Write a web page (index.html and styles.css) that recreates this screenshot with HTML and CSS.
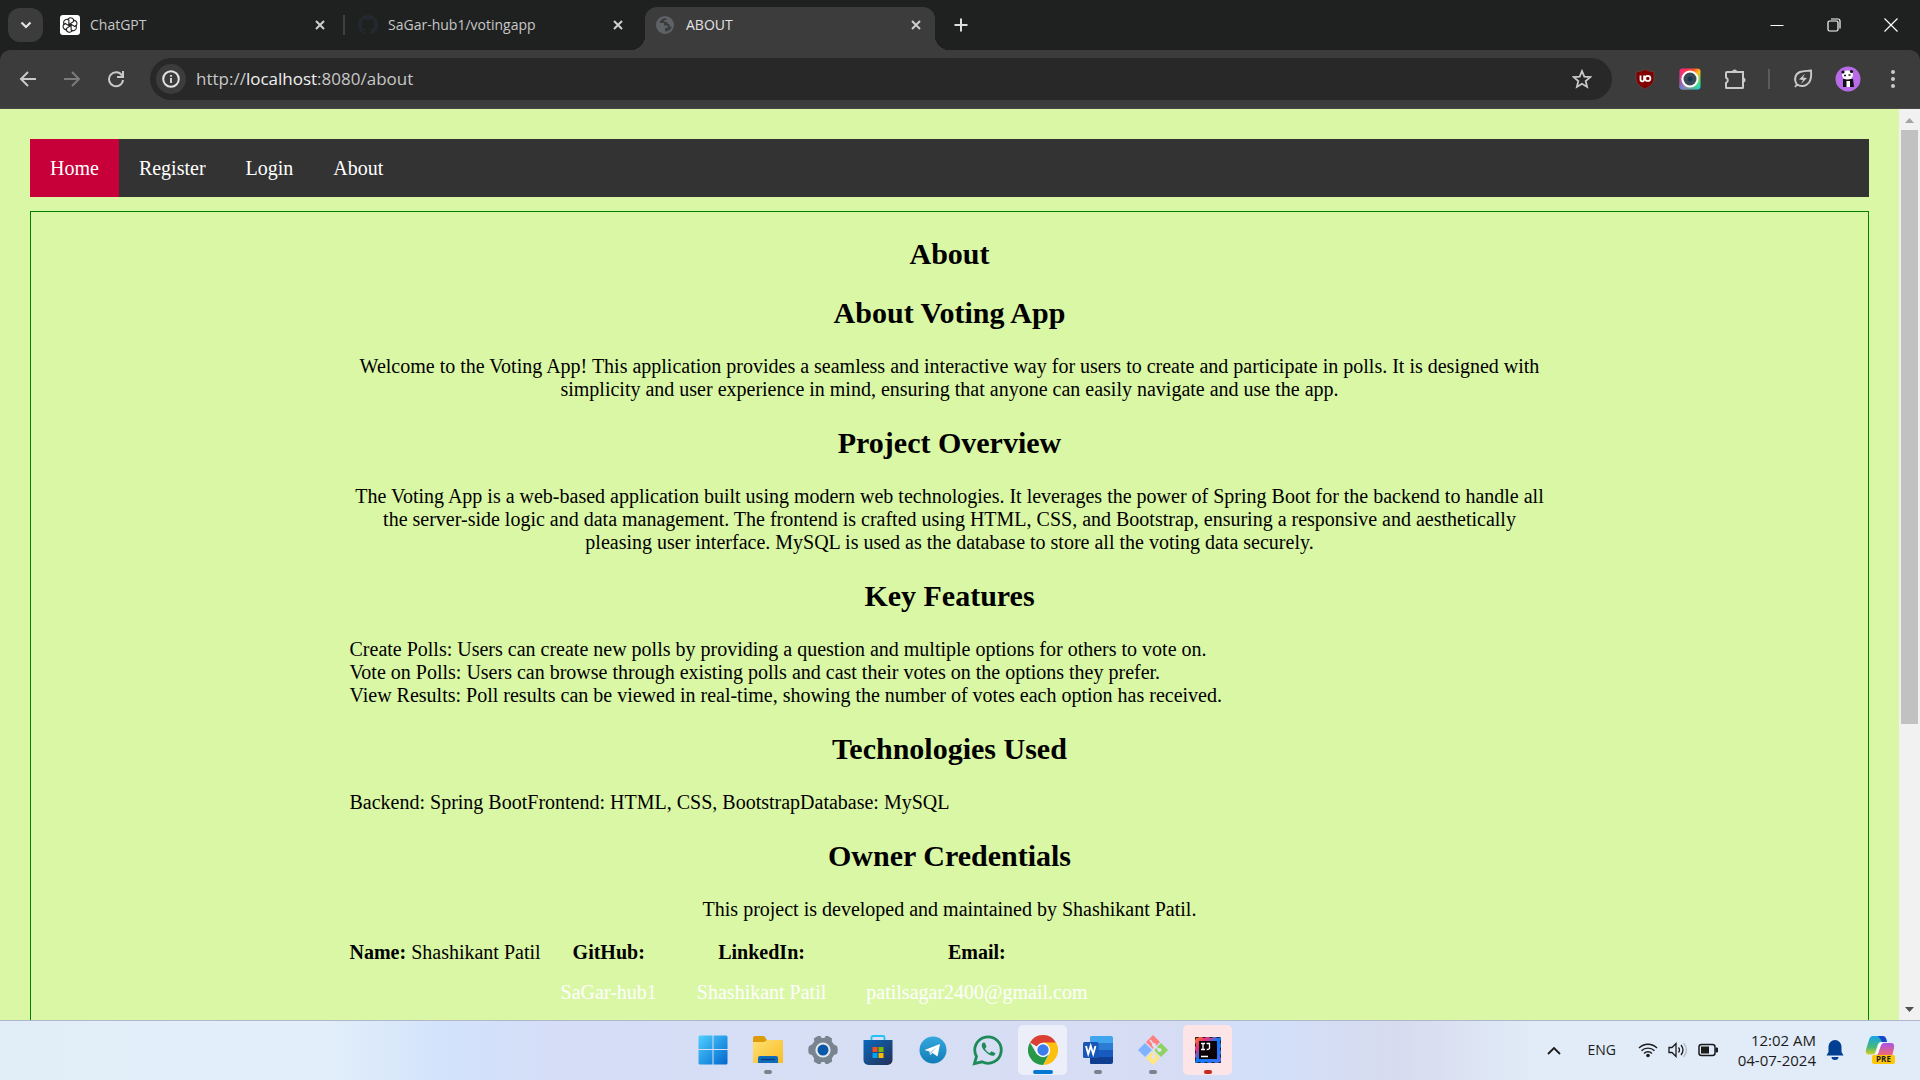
FILE: index.html
```html
<!DOCTYPE html>
<html lang="en">
<head>
<meta charset="utf-8">
<title>ABOUT</title>
<link rel="stylesheet" href="styles.css">
</head>
<body>
<header class="browser">
  <div class="tabstrip">
    <button class="tab-search" aria-label="Search tabs"><svg width="12" height="8" viewBox="0 0 12 8"><path d="M1.500 1.500 6 6l4.500-4.500" fill="none" stroke="#e3e3e3" stroke-width="2.200"/></svg></button>
    <div class="tabs">
      <div class="tab">
        <svg class="favicon" viewBox="0 0 20 20"><rect width="20" height="20" rx="3" fill="#fff"/><g fill="none" stroke="#222" stroke-width="1.100"><path id="petal" d="M7.500 5.200c.5-2.200 3-3 4.800-1.900 1.200.7 1.700 1.900 1.500 3.200L10 8.700v3"/><use href="#petal" transform="rotate(60 10 10)"/><use href="#petal" transform="rotate(120 10 10)"/><use href="#petal" transform="rotate(180 10 10)"/><use href="#petal" transform="rotate(240 10 10)"/><use href="#petal" transform="rotate(300 10 10)"/></g></svg>
        <span class="tab-title">ChatGPT</span>
        <button class="tab-close" aria-label="Close tab"><svg width="10" height="10" viewBox="0 0 10 10"><path d="M1 1l8 8M9 1 1 9"/></svg></button>
      </div>
      <div class="tab tab-divided">
        <svg class="favicon" viewBox="0 0 16 16"><path fill="#24292f" d="M8 0C3.580 0 0 3.580 0 8c0 3.540 2.290 6.530 5.470 7.590.4.070.55-.17.55-.38v-1.490c-2.010.37-2.530-.49-2.690-.94-.09-.23-.48-.94-.82-1.130-.28-.15-.68-.52-.01-.53.63-.01 1.080.58 1.230.82.72 1.210 1.870.87 2.330.66.07-.52.28-.87.51-1.070-1.780-.2-3.640-.89-3.640-3.950 0-.87.31-1.590.82-2.150-.08-.2-.36-1.020.08-2.120 0 0 .67-.21 2.200.82a7.400 7.400 0 0 1 4 0c1.530-1.040 2.200-.82 2.200-.82.44 1.100.16 1.920.08 2.120.51.56.82 1.270.82 2.150 0 3.070-1.870 3.750-3.650 3.950.29.25.54.73.54 1.480v2.200c0 .21.15.46.55.38A8 8 0 0 0 8 0z"/></svg>
        <span class="tab-title">SaGar-hub1/votingapp</span>
        <button class="tab-close" aria-label="Close tab"><svg width="10" height="10" viewBox="0 0 10 10"><path d="M1 1l8 8M9 1 1 9"/></svg></button>
      </div>
      <div class="tab tab-active">
        <svg class="favicon" viewBox="0 0 20 20"><circle cx="9" cy="10" r="9" fill="#5f6368"/><path d="M9.500 3c-3 .2-5.500 2-6 5h4.500v2.500h3.500v2.500H9v3.500c3.500 0 6-2 6.800-5h-2.300V9h-2V7H8.500V5H11z" fill="#3c3c3c"/></svg>
        <span class="tab-title">ABOUT</span>
        <button class="tab-close" aria-label="Close tab"><svg width="10" height="10" viewBox="0 0 10 10"><path d="M1 1l8 8M9 1 1 9"/></svg></button>
      </div>
    </div>
    <button class="tab-new" aria-label="New tab"><svg width="14" height="14" viewBox="0 0 14 14"><path d="M7 .5v13M.5 7h13" stroke="#dedede" stroke-width="2"/></svg></button>
    <div class="window-controls">
      <button aria-label="Minimize"><svg width="14" height="14" viewBox="0 0 14 14"><path d="M.5 7.500h13" stroke="#fff"/></svg></button>
      <button aria-label="Restore"><svg width="14" height="14" viewBox="0 0 14 14"><g fill="none" stroke="#fff" stroke-width="1.200"><rect x="1" y="3" width="10" height="10" rx="1.500"/><path d="M4 1h7a2 2 0 0 1 2 2v7.500"/></g></svg></button>
      <button aria-label="Close"><svg width="14" height="14" viewBox="0 0 14 14"><path d="M.5.5l13 13M13.500.5l-13 13" stroke="#fff" stroke-width="1.200"/></svg></button>
    </div>
  </div>
  <div class="toolbar">
    <button class="tool" aria-label="Back"><svg width="18" height="18" viewBox="0 0 18 18"><path d="M17 9H2M9 2 2 9l7 7" fill="none" stroke="#c9c9c9" stroke-width="2"/></svg></button>
    <button class="tool" aria-label="Forward"><svg width="18" height="18" viewBox="0 0 18 18"><path d="M1 9h15M9 2l7 7-7 7" fill="none" stroke="#7b7b7b" stroke-width="2"/></svg></button>
    <button class="tool" aria-label="Reload"><svg width="18" height="18" viewBox="0 0 18 18"><path d="M15 5.500A7 7 0 1 0 16 10M16 1v6h-6" fill="none" stroke="#c9c9c9" stroke-width="2"/></svg></button>
    <div class="omnibox">
      <button class="site-info" aria-label="Site information"><svg width="18" height="18" viewBox="0 0 18 18"><circle cx="9" cy="9" r="7.800" fill="none" stroke="#e3e3e3" stroke-width="2"/><path d="M9 8v5M9 5v1.800" stroke="#e3e3e3" stroke-width="1.800"/></svg></button>
      <div class="url" role="textbox" aria-label="Address" tabindex="0">http://<span class="host">localhost</span>:8080/about</div>
      <button class="star" aria-label="Bookmark"><svg width="20" height="20" viewBox="0 0 20 20"><path d="M10 2l2.300 5.600 6 .5-4.600 3.900 1.400 5.900L10 14.800l-5.100 3.100L6.300 12 1.700 8.100l6-.5z" fill="none" stroke="#c9c9c9" stroke-width="1.800"/></svg></button>
    </div>
    <div class="extensions">
      <button class="ext" aria-label="uBlock Origin"><svg width="20" height="22" viewBox="0 0 20 22"><path d="M10 1c2.500 1.800 5.500 2.600 9 2.700V11c0 4.500-4 7.500-9 10-5-2.500-9-5.500-9-10V3.700C4.500 3.600 7.500 2.800 10 1z" fill="#800000" stroke="#5c4040"/><path d="M5.500 7.500v4a1.800 1.800 0 0 0 3.600 0v-4" fill="none" stroke="#fff" stroke-width="1.800"/><circle cx="12.800" cy="10.400" r="2.600" fill="none" stroke="#fff" stroke-width="1.700"/></svg></button>
      <button class="ext" aria-label="Screenshot"><svg width="22" height="22" viewBox="0 0 22 22"><defs><linearGradient id="cam" x1="0" y1="0" x2="1" y2="1"><stop offset="0" stop-color="#ff1a8c"/><stop offset=".35" stop-color="#ff4d2e"/><stop offset=".55" stop-color="#ffc21a"/><stop offset=".8" stop-color="#3fe07a"/><stop offset="1" stop-color="#1ac8ff"/></linearGradient><linearGradient id="cam2" x1="1" y1="0" x2="0" y2="1"><stop offset=".5" stop-color="#8a3cff" stop-opacity="0"/><stop offset="1" stop-color="#3c7bff"/></linearGradient></defs><rect x=".5" y=".5" width="21" height="21" rx="3" fill="url(#cam)"/><rect x=".5" y=".5" width="21" height="21" rx="3" fill="url(#cam2)"/><circle cx="11" cy="11" r="8.600" fill="#fff"/><circle cx="11" cy="11" r="6.500" fill="#3a4856"/><circle cx="11" cy="11" r="2.500" fill="#16384f"/></svg></button>
      <button class="ext" aria-label="Extensions"><svg width="22" height="22" viewBox="0 0 22 22"><path d="M3 4h16v0h0V19.500a.5.5 0 0 1-.5.5H2.500a.5.500 0 0 1-.5-.5V15a3 3 0 0 0 0-5.500V5a1 1 0 0 1 1-1z" fill="none" stroke="#c9c9c9" stroke-width="2"/><path d="M8 4a2.600 2.600 0 0 1 5.200 0zM19 9.500a2.500 2.500 0 0 1 0 5z" fill="#c9c9c9"/></svg></button>
      <span class="ext-divider"></span>
      <button class="ext" aria-label="Energy saver"><svg width="20" height="20" viewBox="0 0 20 20"><path d="M2 18l2-2.500C.500 11 2 5 7 3c3-1.200 7-1 11-1.500C18.500 6 18.500 10 16 13.500c-3 4-8 4.500-12 2" fill="none" stroke="#c9c9c9" stroke-width="1.900"/><path d="M12 4.500 6 10.500l4 .5-2 4 6-6-4-.5z" fill="#c9c9c9"/></svg></button>
      <button class="ext" aria-label="Profile"><svg width="26" height="26" viewBox="0 0 26 26"><circle cx="13" cy="13" r="12.500" fill="#b86be6"/><path d="M8 13h10l1 8H8z" fill="#111"/><ellipse cx="12.500" cy="9" rx="5.500" ry="4.500" fill="#fff"/><circle cx="8" cy="6" r="1.600" fill="#111"/><circle cx="16.500" cy="5.500" r="1.600" fill="#111"/><path d="M9 9.500h2M13.500 9h2" stroke="#111" stroke-width="1.600"/><rect x="11.500" y="15" width="3.500" height="6" fill="#fff"/></svg></button>
      <button class="ext" aria-label="Menu"><svg width="4" height="18" viewBox="0 0 4 18"><g fill="#c9c9c9"><circle cx="2" cy="2" r="2"/><circle cx="2" cy="9" r="2"/><circle cx="2" cy="16" r="2"/></g></svg></button>
    </div>
  </div>
</header>

<div class="viewport">
  <main class="page">
    <nav class="navbar">
      <a class="nav-link nav-active" href="#home">Home</a>
      <a class="nav-link" href="#register">Register</a>
      <a class="nav-link" href="#login">Login</a>
      <a class="nav-link" href="#about">About</a>
    </nav>
    <div class="panel">
      <h2>About</h2>
      <div class="content">
        <h2>About Voting App</h2>
        <p>Welcome to the Voting App! This application provides a seamless and interactive way for users to create and participate in polls. It is designed with simplicity and user experience in mind, ensuring that anyone can easily navigate and use the app.</p>
        <h2>Project Overview</h2>
        <p>The Voting App is a web-based application built using modern web technologies. It leverages the power of Spring Boot for the backend to handle all the server-side logic and data management. The frontend is crafted using HTML, CSS, and Bootstrap, ensuring a responsive and aesthetically pleasing user interface. MySQL is used as the database to store all the voting data securely.</p>
        <h2>Key Features</h2>
        <ul>
          <li>Create Polls: Users can create new polls by providing a question and multiple options for others to vote on.</li>
          <li>Vote on Polls: Users can browse through existing polls and cast their votes on the options they prefer.</li>
          <li>View Results: Poll results can be viewed in real-time, showing the number of votes each option has received.</li>
        </ul>
        <h2>Technologies Used</h2>
        <ul class="inline-list">
          <li>Backend: Spring Boot</li>
          <li>Frontend: HTML, CSS, Bootstrap</li>
          <li>Database: MySQL</li>
        </ul>
        <h2>Owner Credentials</h2>
        <p>This project is developed and maintained by Shashikant Patil.</p>
        <ul class="inline-list owner">
          <li><strong>Name:</strong> Shashikant Patil</li>
          <li><strong>GitHub:</strong><a href="#github">SaGar-hub1</a></li>
          <li><strong>LinkedIn:</strong><a href="#linkedin">Shashikant Patil</a></li>
          <li><strong>Email:</strong><a href="#email">patilsagar2400@gmail.com</a></li>
        </ul>
      </div>
    </div>
  </main>
  <div class="scrollbar">
    <svg class="arrow" viewBox="0 0 21 21"><path d="M6 14h9l-4.500-5z" fill="#a3a3a3"/></svg>
    <div class="track"><div class="thumb"></div></div>
    <svg class="arrow" viewBox="0 0 21 21"><path d="M6 8h9l-4.500 5z" fill="#505050"/></svg>
  </div>
</div>

<footer class="taskbar">
  <div></div>
  <div class="apps">
    <button class="app" aria-label="Start"><svg width="30" height="30" viewBox="0 0 30 30"><defs><linearGradient id="win" x1="0" y1="0" x2="1" y2="1"><stop offset="0" stop-color="#4fd0ff"/><stop offset="1" stop-color="#0067cf"/></linearGradient></defs><path d="M2 .5h12.500V14H.5V2A1.500 1.500 0 0 1 2 .5zM15.500.5H28A1.500 1.500 0 0 1 29.500 2v12h-14zM.5 15h14v14.500H2A1.500 1.500 0 0 1 .5 28zM15.500 15h14v13a1.500 1.500 0 0 1-1.500 1.500H15.500z" fill="url(#win)"/></svg></button>
    <button class="app running" aria-label="File Explorer"><svg width="30" height="28" viewBox="0 0 30 28"><defs><linearGradient id="fold" x1="0" y1="0" x2="1" y2="1"><stop offset="0" stop-color="#ffdf70"/><stop offset="1" stop-color="#f9bd27"/></linearGradient></defs><path d="M0 2a2 2 0 0 1 2-2h9l3 4h14a2 2 0 0 1 2 2v4H0z" fill="#dc9b07"/><path d="M0 6h11l3-2h14a2 2 0 0 1 2 2v21H0z" fill="url(#fold)"/><path d="M5 27v-5a2 2 0 0 1 2-2h16a2 2 0 0 1 2 2v5z" fill="#0f6cbd"/><path d="M8 23.500h14" stroke="#0a3f7a" stroke-width="1.500"/></svg></button>
    <button class="app" aria-label="Settings"><svg width="30" height="30" viewBox="0 0 30 30"><path d="M10 1h2.500L13.500 3h3l1-2H20l4 2.500-.3 3L26 9.500 29 11q1.500 4 0 8l-3 1-2.200 3.500.4 3L20 29h-2.500l-1-2h-3l-1 2H10l-4.200-2.500.4-3L4 20l-3-1q-1.500-4 0-8l3-1.500 2.300-3-.5-3z" fill="#788590"/><circle cx="15" cy="15" r="7.600" fill="#e4e9ee"/><circle cx="15" cy="15" r="5.500" fill="#0b57a8"/></svg></button>
    <button class="app" aria-label="Store"><svg width="30" height="30" viewBox="0 0 30 30"><defs><linearGradient id="store" x1="0" y1="0" x2="1" y2="1"><stop offset="0" stop-color="#0a69bd"/><stop offset="1" stop-color="#252f55"/></linearGradient></defs><path d="M8.500 6V2.500a1.500 1.500 0 0 1 1.500-1.500h10a1.500 1.500 0 0 1 1.500 1.500V6" fill="none" stroke="#27c0f5" stroke-width="1.800"/><path d="M.5 5h29v20a5 5 0 0 1-5 5h-19a5 5 0 0 1-5-5z" fill="url(#store)"/><path d="M9.500 12h5v5h-5z" fill="#f25022"/><path d="M15.500 12h5v5h-5z" fill="#7fba00"/><path d="M9.500 18h5v5h-5z" fill="#00a4ef"/><path d="M15.500 18h5v5h-5z" fill="#ffb900"/></svg></button>
    <button class="app" aria-label="Telegram"><svg width="28" height="28" viewBox="0 0 28 28"><defs><linearGradient id="tg" x1="0" y1="0" x2="0" y2="1"><stop offset="0" stop-color="#35a8dd"/><stop offset="1" stop-color="#127cb8"/></linearGradient></defs><circle cx="14" cy="14" r="13.500" fill="url(#tg)"/><path d="M5.500 14 21 8l-2.500 12.500-5-3.500-2.500 2.300L10.500 15.500z" fill="#fff"/><path d="M11 16l7-5-5 5.800-2 2.400z" fill="#b5d5e8"/></svg></button>
    <button class="app" aria-label="WhatsApp"><svg width="32" height="32" viewBox="0 0 32 32"><path d="M2.500 29.500l2-7A13.200 13.200 0 1 1 10 27.800z" fill="none" stroke="#1d8a57" stroke-width="2.800"/><path d="M11.500 8.500c-2.500 1-2.500 4.500 1 8.300s8 6.200 10 4.500l1-2-4-2-2 2q-3-1.500-4.500-4.500l1.500-2-1.500-4z" fill="#1d8a57"/></svg></button>
    <button class="app app-current running" aria-label="Chrome"><svg width="30" height="30" viewBox="0 0 30 30"><path d="M15 15 2 7.500A15 15 0 0 1 28 7.500z" fill="#dc3f34"/><path d="M15 15V7.500h13A15 15 0 0 1 15 30l6.500-11.200z" fill="#fdc00f"/><path d="M2 7.500 8.500 18.800 15 22l6-3-6 11A15 15 0 0 1 2 7.500z" fill="#279848"/><circle cx="15" cy="15" r="7.200" fill="#fff"/><circle cx="15" cy="15" r="5.700" fill="#3b7ded"/></svg></button>
    <button class="app running" aria-label="Word"><svg width="30" height="28" viewBox="0 0 30 28"><path d="M8 0h20a2 2 0 0 1 2 2v5H7V1z" fill="#41a5ee"/><path d="M7 7h23v7H7z" fill="#2b7cd3"/><path d="M7 14h23v7H7z" fill="#185abd"/><path d="M7 21h23v5a2 2 0 0 1-2 2H8a1 1 0 0 1-1-1z" fill="#103f91"/><rect y="6" width="15.500" height="16" rx="1.500" fill="#1857b5"/><path d="M3 10l2.200 8 2.500-8 2.500 8 2.300-8" fill="none" stroke="#fff" stroke-width="1.900"/></svg></button>
    <button class="app running" aria-label="Git Bash"><svg width="30" height="30" viewBox="0 0 30 30"><path d="M15 0l7 7-7 7-7-7z" fill="#ff7e7e"/><path d="M23 8l7 7-7 7-7-7z" fill="#8dd35f"/><path d="M15 16l7 7-7 7-7-7z" fill="#ffe680"/><path d="M7 8l7 7-7 7-7-7z" fill="#80b3ff"/><path d="M12 5l4 5v13M16 10l5 5" fill="none" stroke="#dfe3f4" stroke-width="1.500"/><circle cx="16" cy="10" r="2" fill="#dfe3f4"/><circle cx="21.500" cy="15" r="2" fill="#dfe3f4"/><circle cx="15.500" cy="22" r="2" fill="#dfe3f4"/></svg></button>
    <button class="app app-alert running" aria-label="IntelliJ IDEA"><svg width="26" height="26" viewBox="0 0 26 26"><defs><linearGradient id="ij" x1="0" y1="0" x2="1" y2="1"><stop offset="0" stop-color="#fc801d"/><stop offset=".25" stop-color="#e8317a"/><stop offset=".5" stop-color="#087cfa"/><stop offset="1" stop-color="#4a6cf0"/></linearGradient></defs><rect width="26" height="26" fill="url(#ij)"/><rect x=".5" y=".5" width="25" height="25" fill="none" stroke="#222" stroke-dasharray="3 4"/><rect x="4" y="4" width="18" height="18" fill="#0b0208"/><path d="M6 6.500h4M8 6.500v6M6 12.500h4M11.500 6.500h3v4.500q0 1.500-2.800 1.500M6 19.500h7" fill="none" stroke="#fff" stroke-width="1.300"/></svg></button>
  </div>
  <div class="tray">
    <button class="tray-more" aria-label="Show hidden icons"><svg width="14" height="9" viewBox="0 0 14 9"><path d="M1 8l6-6 6 6" fill="none" stroke="#1b1b1b" stroke-width="1.800"/></svg></button>
    <span class="lang">ENG</span>
    <div class="status">
      <svg width="20" height="16" viewBox="0 0 20 16"><g fill="none" stroke="#1b1b1b" stroke-width="1.400"><path d="M1 6a12.700 12.700 0 0 1 18 0M3.500 8.800a9.200 9.200 0 0 1 13 0M6 11.500a5.600 5.600 0 0 1 8 0"/></g><circle cx="10" cy="13.500" r="1.800" fill="#1b1b1b"/></svg>
      <svg width="20" height="16" viewBox="0 0 20 16"><g fill="none" stroke="#1b1b1b" stroke-width="1.300"><path d="M1 5.500h3L8 1.500v13L4 10.500H1zM10.500 5.500q2 2.500 0 5M13 3q4 5 0 10"/><path d="M15.500 1q6 7 0 14" stroke="#b3bcc6"/></g></svg>
      <svg width="20" height="14" viewBox="0 0 20 14"><rect x="1" y="1.500" width="16" height="11" rx="2.500" fill="none" stroke="#1b1b1b" stroke-width="1.500"/><rect x="3" y="3.500" width="8" height="7" fill="#1b1b1b"/><path d="M18 5h1.500v4H18z" fill="#1b1b1b" stroke="#1b1b1b"/></svg>
    </div>
    <div class="clock"><span>12:02 AM</span><span>04-07-2024</span></div>
    <svg class="bell" width="18" height="20" viewBox="0 0 18 20"><path d="M9 0a6.500 6.500 0 0 1 6.500 6.500V12l2 3.500H.5l2-3.500V6.500A6.500 6.500 0 0 1 9 0zM5.500 17h7a3.500 3 0 0 1-7 0z" fill="#003f91"/></svg>
    <svg class="copilot" width="30" height="30" viewBox="0 0 30 30"><defs><linearGradient id="cp1" x1="0" y1="0" x2="0" y2="1"><stop offset="0" stop-color="#15a5e8"/><stop offset=".6" stop-color="#45b87a"/><stop offset="1" stop-color="#d8d020"/></linearGradient><linearGradient id="cp2" x1="0" y1="0" x2="0" y2="1"><stop offset="0" stop-color="#a855e8"/><stop offset="1" stop-color="#ff6a5c"/></linearGradient></defs><path d="M8 1h10q3 0 4 6h-6q-3 0-4 5l-2 6q-.5 1.500-3 1.500H4q-4 0-3-5L4 5q1-4 4-4z" fill="url(#cp1)"/><path d="M13 1h5q3 0 4 6h-5q-2-4-4-6z" fill="#1747c8"/><path d="M18 8h8q4 0 3 5l-2 9H7q5 0 6-4l2-7q.8-3 3-3z" fill="url(#cp2)"/><path d="M16 8h2q-2 1-3 5l-2 6h-2l2-7q1-4 3-4z" fill="#fff"/><rect x="7" y="20" width="23" height="9" rx="2" fill="#ffc60a"/><text x="18.500" y="27.300" class="copilot-tag">PRE</text></svg>
  </div>
</footer>
</body>
</html>
```
FILE: styles.css
```css
* { box-sizing: border-box; }

body {
  margin: 0;
  height: 100vh;
  display: flex;
  flex-direction: column;
  overflow: hidden;
  font-family: "Open Sans", "Noto Sans", sans-serif;
}

button {
  display: flex;
  align-items: center;
  justify-content: center;
  padding: 0;
  border: 0;
  background: none;
}

svg { display: block; flex: none; }

/* Browser chrome */
.browser { background: #1f2120; }

.tabstrip { display: flex; height: 50px; padding-left: 8px; }

.tab-search {
  width: 35px;
  height: 34px;
  margin: 8px 6px 0 0;
  border-radius: 12px;
  background: #3c3c3c;
}

.tabs { display: flex; gap: 8px; padding-top: 7px; }

.tab {
  position: relative;
  display: flex;
  align-items: center;
  width: 290px;
  padding: 0 9px 7px 11px;
  height: 43px;
}

.favicon { width: 20px; height: 20px; }

.tab-title {
  flex: 1;
  padding-left: 10px;
  font-size: 14px;
  line-height: 20px;
  color: #c7c7c7;
}

.tab-close { width: 20px; height: 20px; }
.tab-close path { stroke: #d0d0d0; stroke-width: 2; }

.tab-divided::before {
  content: "";
  position: absolute;
  left: -4px;
  top: 8px;
  width: 2px;
  height: 20px;
  background: #3f4140;
}

.tab-active { border-radius: 12px 12px 0 0; background: #3c3c3c; }
.tab-active .tab-title { color: #e3e3e3; }

.tab-active::before,
.tab-active::after {
  content: "";
  position: absolute;
  bottom: 0;
  width: 14px;
  height: 14px;
}
.tab-active::before { left: -14px; background: radial-gradient(circle at 0 0, transparent 14px, #3c3c3c 14px); }
.tab-active::after { right: -14px; background: radial-gradient(circle at 100% 0, transparent 14px, #3c3c3c 14px); }

.tab-new { width: 34px; height: 34px; margin: 8px 0 0 9px; }

.window-controls { display: flex; margin-left: auto; padding-right: 1px; }
.window-controls button { width: 57px; height: 49px; }

.toolbar {
  display: flex;
  align-items: center;
  height: 59px;
  padding: 0 5px 0 6px;
  border-bottom: 1px solid #494949;
  border-radius: 10px 10px 0 0;
  background: #3c3c3c;
}

.tool { width: 44px; height: 44px; }

.omnibox {
  flex: 1;
  display: flex;
  align-items: center;
  height: 42px;
  margin: 0 10px 0 12px;
  padding: 0 12px 0 6px;
  border-radius: 21px;
  background: #282828;
}

.site-info { width: 30px; height: 30px; border-radius: 15px; background: #3c3c3c; }
.url { flex: 1; padding-left: 10px; font-size: 17px; line-height: 24px; color: #c7c7c7; }
.host { color: #f1f1f1; }
.star { width: 36px; height: 36px; }

.extensions { display: flex; align-items: center; }
.ext { width: 45px; height: 40px; }
.ext-divider { width: 2px; height: 20px; margin: 0 10px 0 11px; background: #5c5c5c; }

/* Web page */
.viewport { flex: 1; display: flex; min-height: 0; background: #daf7a6; }

.page {
  flex: 1;
  padding: 30px;
  overflow: hidden;
  font-family: "Liberation Serif", "Times New Roman", serif;
  font-size: 20px;
  line-height: 23px;
  color: #000;
}

.navbar { display: flex; margin-bottom: 14px; background: #333; }
.nav-link { padding: 17px 20px; line-height: 24px; color: #fff; text-decoration: none; }
.nav-active { background: #c70039; }

.panel { padding-bottom: 400px; border: 1px solid #008000; text-align: center; }
.content { max-width: 1200px; margin: 0 auto; }

h2 { margin: 25px 0; font-size: 30px; line-height: 34px; }
p { margin: 20px 0; }
ul { margin: 0; padding: 0; list-style: none; text-align: left; }

.inline-list { display: flex; }
.owner { text-align: center; }
.owner a { display: block; padding: 16px 20px; line-height: 24px; color: #fff; text-decoration: none; }

.scrollbar { display: flex; flex-direction: column; width: 21px; background: #f1f1f1; }
.arrow { width: 21px; height: 21px; }
.track { flex: 1; padding: 0 2px; }
.thumb { height: 68.400%; background: #c1c1c1; }

/* Taskbar */
.taskbar {
  display: grid;
  grid-template-columns: 1fr auto 1fr;
  height: 60px;
  padding-bottom: 1px;
  border-top: 1px solid #b0b7c6;
  background: linear-gradient(90deg, #e1edf7, #e2eef9 17%, #d3e3fb 23%, #d5ddf7 29%, #d7dff5 45%, #d6dcf3 60%, #d2dff9 66%, #d7dbee 73%, #e1ecf8 80%, #e2ecf8);
}

.apps { display: flex; }

.app { position: relative; width: 55px; height: 58px; }
.app svg { position: relative; }

.running::after {
  content: "";
  position: absolute;
  left: 50%;
  bottom: 5px;
  width: 8px;
  height: 4px;
  border-radius: 2px;
  background: #7b828c;
  transform: translateX(-50%);
}

.app-current::before,
.app-alert::before {
  content: "";
  position: absolute;
  inset: 4px 3px;
  border-radius: 5px;
  background: #eceffa;
}
.app-alert::before { background: #fde5e7; }
.app-current::after { width: 20px; background: #0078d4; }
.app-alert::after { background: #c42b1c; }

.tray { display: flex; align-items: center; justify-content: flex-end; padding-right: 25px; color: #1b1b1b; }
.tray-more { width: 24px; height: 40px; }
.lang { padding: 0 22px; font-size: 14px; line-height: 20px; }
.status { display: flex; align-items: center; gap: 10px; }
.clock {
  display: flex;
  flex-direction: column;
  width: 98px;
  text-align: right;
  font-size: 15px;
  line-height: 20px;
}
.bell { margin: 0 21px 0 10px; }
.copilot-tag { font-size: 8px; font-weight: 700; text-anchor: middle; fill: #222; }
```
